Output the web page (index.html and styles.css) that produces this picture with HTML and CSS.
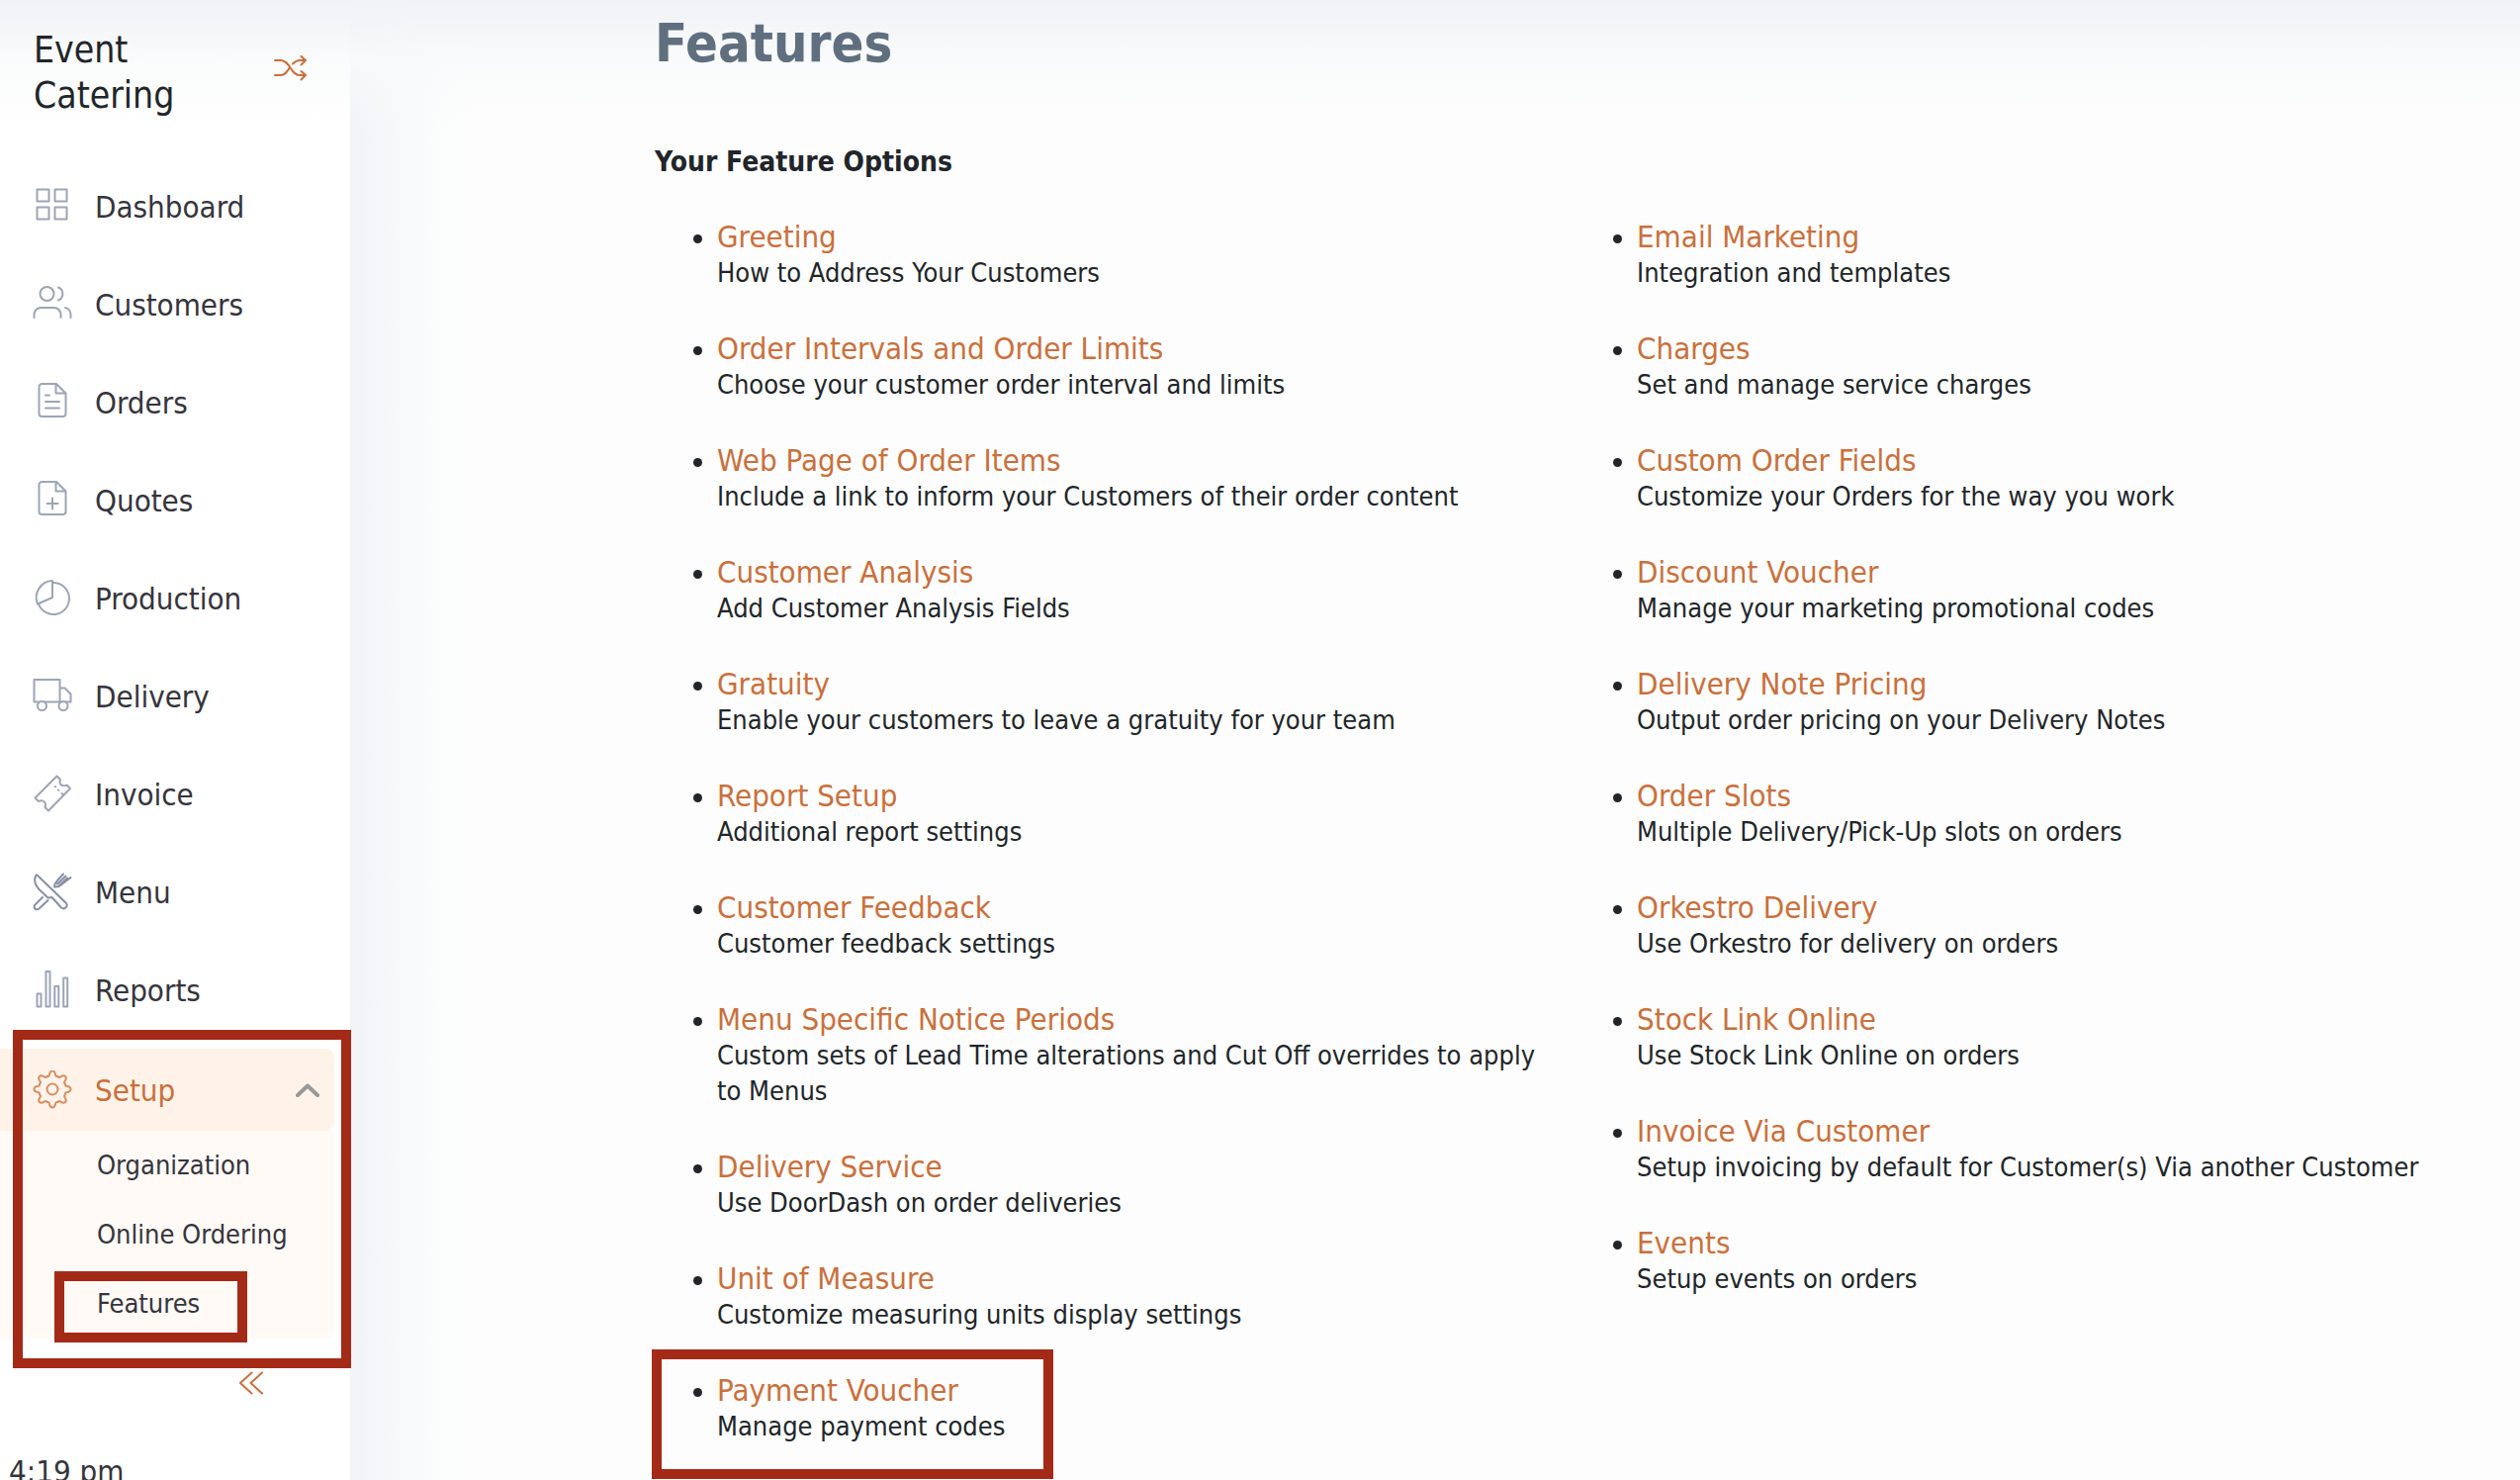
FILE: index.html
```html
<!DOCTYPE html>
<html lang="en">
<head>
<meta charset="utf-8">
<title>Features</title>
<link rel="stylesheet" href="styles.css">
</head>
<body>
<div class="shell">
  <aside class="sidebar">
    <header class="brand">
      <h2 class="brand-name">Event Catering</h2>
      <button class="icon-button" type="button" aria-label="Switch account">
        <svg class="shuffle" viewBox="0 0 34 26"><path d="M1 5h6c9 0 10 15 19 15h6M1 20h6c4 0 6-3 8.500-7M19 8.500C21 6.500 23 5 26 5h6M27.500 1l4.500 4-4.500 4.500M27.500 16l4.500 4-4.500 4.500"/></svg>
      </button>
    </header>
    <nav class="nav">
      <a class="nav-item" href="#"><svg class="icon" viewBox="0 0 40 40"><path d="M4.500 2.500h12v12h-12zM22.500 2.500h12v12h-12zM4.500 20.500h12v12h-12zM22.500 20.500h12v12h-12z"/></svg>Dashboard</a>
      <a class="nav-item" href="#"><svg class="icon" viewBox="0 0 40 40"><circle cx="14.500" cy="9" r="7"/><path d="M26 2.500a7 7 0 0 1 0 13M1.500 33v-3a7 7 0 0 1 7-7h13a7 7 0 0 1 7 7v3M33 23a7 7 0 0 1 5.500 7v3"/></svg>Customers</a>
      <a class="nav-item" href="#"><svg class="icon" viewBox="0 0 40 40"><path d="M9.500 1H24l9.500 9.500V31a3 3 0 0 1-3 3h-21a3 3 0 0 1-3-3V4a3 3 0 0 1 3-3zM23.500 1.500v9H33M13 12.500h4M13 19h14M13 25.500h14"/></svg>Orders</a>
      <a class="nav-item" href="#"><svg class="icon" viewBox="0 0 40 40"><path d="M9.500 1H24l9.500 9.500V31a3 3 0 0 1-3 3h-21a3 3 0 0 1-3-3V4a3 3 0 0 1 3-3zM23.500 1.500v9H33M20 17.500v11M14.500 23h11"/></svg>Quotes</a>
      <a class="nav-item" href="#"><svg class="icon" viewBox="0 0 40 40"><path d="M20 2v17L5 25.500A17 17 0 0 1 20 2zM20 4A16 16 0 1 1 6 25.500"/></svg>Production</a>
      <a class="nav-item" href="#"><svg class="icon" viewBox="0 0 40 40"><path d="M1.500 3h26v22.500h-26zM27.500 11.500h5l6 6v8h-11"/><circle class="wheel" cx="9.500" cy="29.500" r="4.500"/><circle class="wheel" cx="31" cy="29.500" r="4.500"/></svg>Delivery</a>
      <a class="nav-item" href="#"><svg class="icon" viewBox="0 0 40 40"><path d="M24.500 1.500l3.500 3.500c-2 4 2 8 6.500 5.500L38 14 16 36.500 12.500 33c2-4.500-2-8.500-6.500-6L2.500 23.500zM22.700 12l.3.300M26 15.500l.3.300M29.500 19l1.500 1.500"/></svg>Invoice</a>
      <a class="nav-item" href="#"><svg class="icon icon-strong" viewBox="0 0 40 40"><path d="M3.500 2.500C.500 8 3 13 6.500 17l9 8.500 4-.5L29 35.500c3.500 2.500 7-1.500 5-4.500L4.500 2.500zM10 25l-8 8c-1.500 4 2 5 4.500 3.500l9-8.500M22 14.500c0-3 1-4.500 3-6.500l6-6.500M22 14.500c3 .5 6-1 8-3L38.500 5M25 11.500l8.500-8M27 13l8-7.500"/></svg>Menu</a>
      <a class="nav-item" href="#"><svg class="icon" viewBox="0 0 40 40"><path d="M4.500 23.500h4V36.500h-4zM13.500 1h4v35.500h-4zM22.300 16h4v20.500h-4zM31.200 7.500h4v29h-4z"/></svg>Reports</a>
      <div class="nav-group">
        <a class="nav-item nav-item-active" href="#">
          <svg class="icon" viewBox="0 0 40 40">
            <defs><path id="tooth" d="M-5.400-13C-1.500-12-4.500-18.500 0-18.500S1.500-12 5.400-13"/></defs>
            <g transform="translate(20 19)"><circle r="5.500"/><use href="#tooth"/><use href="#tooth" transform="rotate(45)"/><use href="#tooth" transform="rotate(90)"/><use href="#tooth" transform="rotate(135)"/><use href="#tooth" transform="rotate(180)"/><use href="#tooth" transform="rotate(225)"/><use href="#tooth" transform="rotate(270)"/><use href="#tooth" transform="rotate(315)"/></g>
          </svg>Setup
          <svg class="chevron" viewBox="0 0 24 14"><path d="M2 12L12 2.500 22 12"/></svg>
        </a>
        <div class="subnav">
          <a class="subnav-item" href="#">Organization</a>
          <a class="subnav-item" href="#">Online Ordering</a>
          <a class="subnav-item" href="#">Features<span class="callout callout-subitem"></span></a>
        </div>
        <span class="callout callout-group"></span>
      </div>
    </nav>
    <button class="icon-button collapse" type="button" aria-label="Collapse menu">
      <svg class="collapse-icon" viewBox="0 0 26 24"><path d="M13.500 1.500L2 12l11.500 10.500M24 1.500L12.500 12 24 22.500"/></svg>
    </button>
    <p class="clock">4:19 pm</p>
  </aside>
  <main class="main">
    <h1 class="title">Features</h1>
    <h3 class="subtitle">Your Feature Options</h3>
    <div class="columns">
      <ul class="features">
        <li class="feature"><a href="#">Greeting</a><p>How to Address Your Customers</p></li>
        <li class="feature"><a href="#">Order Intervals and Order Limits</a><p>Choose your customer order interval and limits</p></li>
        <li class="feature"><a href="#">Web Page of Order Items</a><p>Include a link to inform your Customers of their order content</p></li>
        <li class="feature"><a href="#">Customer Analysis</a><p>Add Customer Analysis Fields</p></li>
        <li class="feature"><a href="#">Gratuity</a><p>Enable your customers to leave a gratuity for your team</p></li>
        <li class="feature"><a href="#">Report Setup</a><p>Additional report settings</p></li>
        <li class="feature"><a href="#">Customer Feedback</a><p>Customer feedback settings</p></li>
        <li class="feature"><a href="#">Menu Specific Notice Periods</a><p>Custom sets of Lead Time alterations and Cut Off overrides to apply to Menus</p></li>
        <li class="feature"><a href="#">Delivery Service</a><p>Use DoorDash on order deliveries</p></li>
        <li class="feature"><a href="#">Unit of Measure</a><p>Customize measuring units display settings</p></li>
        <li class="feature"><a href="#">Payment Voucher</a><p>Manage payment codes</p><span class="callout callout-feature"></span></li>
      </ul>
      <ul class="features">
        <li class="feature"><a href="#">Email Marketing</a><p>Integration and templates</p></li>
        <li class="feature"><a href="#">Charges</a><p>Set and manage service charges</p></li>
        <li class="feature"><a href="#">Custom Order Fields</a><p>Customize your Orders for the way you work</p></li>
        <li class="feature"><a href="#">Discount Voucher</a><p>Manage your marketing promotional codes</p></li>
        <li class="feature"><a href="#">Delivery Note Pricing</a><p>Output order pricing on your Delivery Notes</p></li>
        <li class="feature"><a href="#">Order Slots</a><p>Multiple Delivery/Pick-Up slots on orders</p></li>
        <li class="feature"><a href="#">Orkestro Delivery</a><p>Use Orkestro for delivery on orders</p></li>
        <li class="feature"><a href="#">Stock Link Online</a><p>Use Stock Link Online on orders</p></li>
        <li class="feature"><a href="#">Invoice Via Customer</a><p>Setup invoicing by default for Customer(s) Via another Customer</p></li>
        <li class="feature"><a href="#">Events</a><p>Setup events on orders</p></li>
      </ul>
    </div>
  </main>
</div>
</body>
</html>
```
FILE: styles.css
```css
:root {
  --accent: #c9703c;
  --callout: #a42a18;
  --ink: #212529;
  --nav-ink: #35343c;
  --icon: #9ca5b5;
  --top-shade: linear-gradient(#f1f2f5, rgba(249, 250, 251, .8) 60px, rgba(255, 255, 255, 0) 130px);
}

* {
  box-sizing: border-box;
}

body {
  margin: 0;
  overflow: hidden;
  color: var(--ink);
  font-family: Tahoma, "DejaVu Sans Condensed", "Noto Sans", sans-serif;
  font-size: 27px;
  line-height: 36px;
}

h1, h2, h3, p, ul {
  margin: 0;
}

a {
  color: inherit;
  text-decoration: none;
}

svg {
  display: block;
  flex: none;
  fill: none;
  stroke: currentColor;
  stroke-width: 2;
  stroke-linecap: round;
  stroke-linejoin: round;
}

.shell {
  display: flex;
  height: 100vh;
}

/* Sidebar */
.sidebar {
  position: relative;
  z-index: 1;
  display: flex;
  flex: none;
  flex-direction: column;
  width: 354px;
  padding-top: 28px;
  background: var(--top-shade), #fff;
  color: var(--nav-ink);
}

.brand {
  display: flex;
  align-items: flex-start;
  justify-content: space-between;
  padding: 0 43px 0 34px;
  margin-bottom: 47px;
}

.brand-name {
  width: min-content;
  color: var(--ink);
  font-size: 37px;
  font-weight: 400;
  line-height: 46px;
}

.icon-button {
  padding: 0;
  border: 0;
  background: none;
  color: var(--accent);
}

.shuffle {
  width: 34px;
  height: 26px;
  margin-top: 28px;
}

.nav {
  display: flex;
  flex-direction: column;
  gap: 16px;
}

.nav-item {
  display: flex;
  align-items: center;
  gap: 23px;
  height: 83px;
  padding: 0 15px 0 33px;
  font-size: 31px;
}

.icon {
  width: 40px;
  height: 40px;
  color: var(--icon);
}

.icon-strong {
  color: #8791a3;
}

.wheel {
  fill: #fff;
}

.nav-group {
  position: relative;
  margin-top: 2px;
}

.nav-item-active {
  margin-right: 16px;
  border-radius: 0 8px 8px 0;
  background: #fff3e9;
  color: var(--accent);
}

.nav-item-active .icon {
  color: #d98f62;
}

.chevron {
  width: 24px;
  height: 14px;
  margin-left: auto;
  color: #999;
  stroke-width: 4;
}

.subnav {
  margin-right: 16px;
  border-radius: 0 0 8px 0;
  background: #fffaf6;
}

.subnav-item {
  position: relative;
  display: flex;
  align-items: center;
  height: 70px;
  padding-left: 98px;
}

.collapse {
  align-self: flex-end;
  margin: 33px 87px 0 0;
}

.collapse-icon {
  width: 26px;
  height: 24px;
}

.clock {
  padding: 59px 0 0 9px;
  font-size: 31px;
}

/* Highlight frames drawn over the page */
.callout {
  position: absolute;
  border: 10px solid var(--callout);
  pointer-events: none;
}

.callout-group {
  top: -19px;
  left: 13px;
  width: 342px;
  height: 342px;
}

.callout-subitem {
  top: 2px;
  left: 55px;
  width: 195px;
  height: 72px;
}

.callout-feature {
  top: -22px;
  left: -66px;
  width: 406px;
  height: 131px;
}

/* Main area */
.main {
  flex: 1;
  padding: 10px 56px 0 308px;
  background:
    var(--top-shade),
    linear-gradient(90deg, #f1f3f6, #f6f7f9 36px, #fbfcfc 90px, #fdfdfd 130px);
}

.title {
  color: #5f6f7f;
  font-size: 54px;
  line-height: 68px;
}

.subtitle {
  margin: 68px 0 38px;
  font-size: 28px;
}

.columns {
  display: grid;
  grid-template-columns: 1fr 1fr;
  gap: 30px;
}

.features {
  padding: 0 0 0 63px;
  list-style: none;
}

.feature {
  position: relative;
  margin-bottom: 39px;
}

.feature::before {
  position: absolute;
  top: 17px;
  left: -24px;
  width: 9px;
  height: 9px;
  border-radius: 50%;
  background: var(--ink);
  content: "";
}

.feature a {
  display: block;
  color: var(--accent);
  font-size: 31px;
  line-height: 38px;
}
```
